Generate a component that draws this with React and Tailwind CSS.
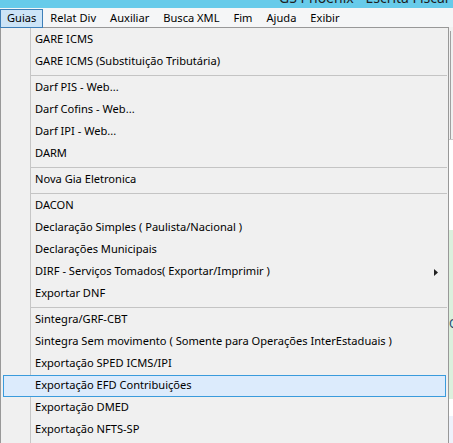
import React from "react";

const menus = ["Guias", "Relat Div", "Auxiliar", "Busca XML", "Fim", "Ajuda", "Exibir"];

const groups = [
  ["GARE ICMS", "GARE ICMS (Substituição Tributária)"],
  ["Darf PIS - Web...", "Darf Cofins - Web...", "Darf IPI - Web...", "DARM"],
  ["Nova Gia Eletronica"],
  [
    "DACON",
    "Declaração Simples ( Paulista/Nacional )",
    "Declarações Municipais",
    "DIRF - Serviços Tomados( Exportar/Imprimir )",
    "Exportar DNF",
  ],
  [
    "Sintegra/GRF-CBT",
    "Sintegra Sem movimento ( Somente para Operações InterEstaduais )",
    "Exportação SPED ICMS/IPI",
    "Exportação EFD Contribuições",
    "Exportação DMED",
    "Exportação NFTS-SP",
  ],
];

const SUB = "DIRF - Serviços Tomados( Exportar/Imprimir )";
const HOT = "Exportação EFD Contribuições";

function Item({ label }) {
  const hot = label === HOT;
  return (
    <div
      className={
        hot
          ? "flex h-[22px] items-center justify-between border border-[#3a9bdc] bg-[#dcebfc] pl-[31px] pr-[7px]"
          : "flex h-[22px] items-center justify-between border border-transparent pl-[31px] pr-[7px]"
      }
    >
      <span className="-mt-px whitespace-nowrap">{label}</span>
      {label === SUB && (
        <svg width="4" height="7" viewBox="0 0 4 7" className="mt-px">
          <polygon points="0,0 4,3.5 0,7" fill="#222" />
        </svg>
      )}
    </div>
  );
}

function Separator() {
  return (
    <div className="h-[4px] pt-[2px] pl-[28px] -mr-px">
      <div className="h-px bg-[#c4c4c4]" />
    </div>
  );
}

export default function App() {
  return (
    <div className="w-[453px] h-[443px] overflow-hidden bg-white font-['Noto_Sans',sans-serif] text-[11.1px] text-black">
      {/* title bar */}
      <div className="h-[8px] overflow-hidden bg-[#67cbea]">
        <div className="-mt-[9px] pl-[279px] whitespace-nowrap text-[14px] leading-[14px] text-[#1e1e1e]">
          GS Phoenix - Escrita Fiscal
        </div>
      </div>

      {/* menu bar */}
      <div className="flex h-[19px] bg-[#f5f6f7]">
        {menus.map((m, i) => (
          <div
            key={m}
            className={
              i === 0
                ? "relative z-10 mt-px flex h-[19px] items-center border border-[#3d7fb8] bg-[#cce4f7] px-[6px]"
                : "mt-px flex h-[19px] items-center border border-transparent px-[6px]"
            }
          >
            <span className="-mt-px">{m}</span>
          </div>
        ))}
      </div>

      {/* body */}
      <div className="flex h-[416px]">
        {/* dropdown */}
        <div className="w-[449px] border-x border-t border-[#989898] bg-[linear-gradient(to_right,#f0f0f0_29px,#c6c6c6_29px,#c6c6c6_30px,#f0f0f0_30px)] px-[2px] pt-px">
          {groups.map((g, gi) => (
            <div key={gi}>
              {gi > 0 && <Separator />}
              {g.map((l) => (
                <Item key={l} label={l} />
              ))}
            </div>
          ))}
        </div>

        {/* window content peeking on the right */}
        <div className="flex w-[4px] flex-col overflow-hidden">
          <div className="flex h-[112px] bg-[#f0f0f0] pl-px pt-[4px]">
            <div className="w-px bg-[#a0a0a0]" />
          </div>
          <div className="h-px bg-[#c8c8c8]" />
          <div className="h-[90px] bg-white" />
          <div className="relative h-[169px] bg-[#dcf0dd]">
            <span className="absolute left-0 top-[88px] text-[12px] leading-[12px] text-[#24466e]">O</span>
          </div>
          <div className="h-[17px] bg-white" />
          <div className="flex-1 bg-[#eef2fb]" />
        </div>
      </div>
    </div>
  );
}
